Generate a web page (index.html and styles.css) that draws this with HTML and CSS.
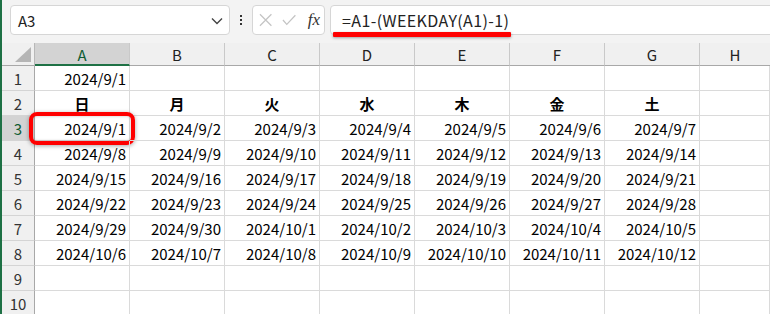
FILE: index.html
```html
<!DOCTYPE html>
<html lang="ja">
<head>
    <meta charset="UTF-8">
    <title>WEEKDAY calendar</title>
    <link rel="stylesheet" href="styles.css">
</head>
<body>
    <div class="app">
        <div class="toolbar">
            <div class="namebox">
                <span>A3</span>
                <svg class="chev" width="12" height="8" viewBox="0 0 12 8"><polyline points="1,1.5 6,6.5 11,1.5" fill="none" stroke="#444" stroke-width="1.4"/></svg>
            </div>
            <div class="kebab"><i></i><i></i><i></i></div>
            <div class="fxbox">
                <svg width="14" height="14" viewBox="0 0 14 14"><path d="M1 1 L13 13 M13 1 L1 13" stroke="#c4c4c4" stroke-width="1.3" fill="none"/></svg>
                <svg width="15" height="12" viewBox="0 0 15 12"><polyline points="1,6 5,10.5 14,1" stroke="#c4c4c4" stroke-width="1.3" fill="none"/></svg>
                <span class="fx">fx</span>
            </div>
            <div class="formula">
                <span>=A1-(WEEKDAY(A1)-1)</span>
                <div class="underline"></div>
            </div>
        </div>

        <div class="sheet">
            <div class="corner"><div class="tri"></div></div>
            <div class="colhead sel">A</div>
            <div class="colhead">B</div>
            <div class="colhead">C</div>
            <div class="colhead">D</div>
            <div class="colhead">E</div>
            <div class="colhead">F</div>
            <div class="colhead">G</div>
            <div class="colhead last">H</div>

            <div class="rowhead">1</div>
            <div class="cell num">2024/9/1</div><div class="cell"></div><div class="cell"></div><div class="cell"></div><div class="cell"></div><div class="cell"></div><div class="cell"></div><div class="cell"></div>

            <div class="rowhead">2</div>
            <div class="cell day">日</div><div class="cell day">月</div><div class="cell day">火</div><div class="cell day">水</div><div class="cell day">木</div><div class="cell day">金</div><div class="cell day">土</div><div class="cell"></div>

            <div class="rowhead sel">3</div>
            <div class="cell num active">2024/9/1<div class="mark"></div></div><div class="cell num">2024/9/2</div><div class="cell num">2024/9/3</div><div class="cell num">2024/9/4</div><div class="cell num">2024/9/5</div><div class="cell num">2024/9/6</div><div class="cell num">2024/9/7</div><div class="cell"></div>

            <div class="rowhead">4</div>
            <div class="cell num">2024/9/8</div><div class="cell num">2024/9/9</div><div class="cell num">2024/9/10</div><div class="cell num">2024/9/11</div><div class="cell num">2024/9/12</div><div class="cell num">2024/9/13</div><div class="cell num">2024/9/14</div><div class="cell"></div>

            <div class="rowhead">5</div>
            <div class="cell num">2024/9/15</div><div class="cell num">2024/9/16</div><div class="cell num">2024/9/17</div><div class="cell num">2024/9/18</div><div class="cell num">2024/9/19</div><div class="cell num">2024/9/20</div><div class="cell num">2024/9/21</div><div class="cell"></div>

            <div class="rowhead">6</div>
            <div class="cell num">2024/9/22</div><div class="cell num">2024/9/23</div><div class="cell num">2024/9/24</div><div class="cell num">2024/9/25</div><div class="cell num">2024/9/26</div><div class="cell num">2024/9/27</div><div class="cell num">2024/9/28</div><div class="cell"></div>

            <div class="rowhead">7</div>
            <div class="cell num">2024/9/29</div><div class="cell num">2024/9/30</div><div class="cell num">2024/10/1</div><div class="cell num">2024/10/2</div><div class="cell num">2024/10/3</div><div class="cell num">2024/10/4</div><div class="cell num">2024/10/5</div><div class="cell"></div>

            <div class="rowhead">8</div>
            <div class="cell num">2024/10/6</div><div class="cell num">2024/10/7</div><div class="cell num">2024/10/8</div><div class="cell num">2024/10/9</div><div class="cell num">2024/10/10</div><div class="cell num">2024/10/11</div><div class="cell num">2024/10/12</div><div class="cell"></div>

            <div class="rowhead">9</div>
            <div class="cell"></div><div class="cell"></div><div class="cell"></div><div class="cell"></div><div class="cell"></div><div class="cell"></div><div class="cell"></div><div class="cell"></div>

            <div class="rowhead">10</div>
            <div class="cell"></div><div class="cell"></div><div class="cell"></div><div class="cell"></div><div class="cell"></div><div class="cell"></div><div class="cell"></div><div class="cell"></div>
        </div>
    </div>
</body>
</html>
```

FILE: styles.css
```css
body {
    margin: 0;
    font-family: "Noto Sans CJK JP", "Noto Sans", sans-serif;
    background-color: #fff;
    overflow: hidden;
}
.app {
    width: 770px;
    height: 314px;
    border-left: 2px solid #1e7145;
    box-sizing: border-box;
    overflow: hidden;
}
.toolbar {
    display: flex;
    align-items: flex-start;
    height: 43px;
    box-sizing: border-box;
    padding: 5px 0 0 8px;
    background-color: #f3f3f3;
}
.namebox {
    width: 220px;
    height: 30px;
    box-sizing: border-box;
    background: #fff;
    border: 1px solid #d6d6d6;
    border-radius: 4px;
    display: flex;
    align-items: center;
    justify-content: space-between;
    padding: 0 6px 0 7px;
    font-size: 15px;
    color: #222;
}
.chev {
    margin-top: 2px;
}
.kebab {
    width: 22px;
    height: 30px;
    display: flex;
    flex-direction: column;
    align-items: center;
    justify-content: center;
    gap: 2px;
}
.kebab i {
    width: 2px;
    height: 2px;
    background: #333;
}
.fxbox {
    width: 73px;
    height: 30px;
    box-sizing: border-box;
    background: #fff;
    border: 1px solid #d6d6d6;
    border-radius: 4px;
    display: flex;
    align-items: center;
    padding: 0 4px 0 6px;
    gap: 10px;
}
.fx {
    font-family: "Liberation Serif", serif;
    font-style: italic;
    font-size: 17px;
    color: #333;
    margin-left: 1px;
}
.formula {
    position: relative;
    flex: 1;
    height: 30px;
    box-sizing: border-box;
    margin-left: 5px;
    margin-right: -10px;
    background: #fff;
    border: 1px solid #d6d6d6;
    border-radius: 4px;
    padding: 0 0 0 11px;
    display: flex;
    align-items: center;
    font-size: 16px;
    letter-spacing: 0.4px;
    color: #222;
}
.underline {
    position: absolute;
    left: 2px;
    top: 26px;
    width: 178px;
    height: 5px;
    background: #ff0000;
    box-shadow: 0 1px 3px rgba(0, 0, 0, 0.35);
    border-radius: 1px;
}
.sheet {
    display: grid;
    grid-template-columns: 33px repeat(7, 95px) 1fr;
    grid-template-rows: 23px repeat(10, 25px);
    font-size: 15px;
}
.corner {
    background: #f0f0f0;
    border-right: 1px solid #b8b8b8;
    border-bottom: 1px solid #a8a8a8;
    display: flex;
    align-items: flex-end;
    justify-content: flex-end;
    padding: 0 3px 3px 0;
}
.tri {
    width: 0;
    height: 0;
    border-left: 16px solid transparent;
    border-bottom: 15px solid #b5b5b5;
}
.colhead {
    background: #f0f0f0;
    border-right: 1px solid #c9c9c9;
    border-bottom: 1px solid #a8a8a8;
    display: flex;
    align-items: center;
    justify-content: center;
    color: #222;
    padding-top: 1px;
}
.colhead.sel {
    background: #d3d3d3;
    border-bottom: 2px solid #1e7145;
    color: #0f5c33;
}
.colhead.last {
    border-right: none;
}
.rowhead {
    background: #f0f0f0;
    border-right: 1px solid #a8a8a8;
    border-bottom: 1px solid #d4d4d4;
    display: flex;
    align-items: center;
    justify-content: center;
    color: #333;
}
.rowhead.sel {
    background: #d3d3d3;
    color: #0f5c33;
}
.cell {
    position: relative;
    border-right: 1px solid #dadada;
    border-bottom: 1px solid #dadada;
    display: flex;
    align-items: center;
    color: #000;
    padding: 1px 3px 0 3px;
    white-space: nowrap;
}
.num {
    justify-content: flex-end;
}
.day {
    justify-content: center;
    font-weight: bold;
}
.mark {
    position: absolute;
    left: -6px;
    top: -4px;
    width: 106px;
    height: 33px;
    box-sizing: border-box;
    border: 4px solid #ff0000;
    border-radius: 8px;
    box-shadow: 0 1px 4px rgba(0, 0, 0, 0.35), inset 0 0 3px rgba(0, 0, 0, 0.25);
}
```
